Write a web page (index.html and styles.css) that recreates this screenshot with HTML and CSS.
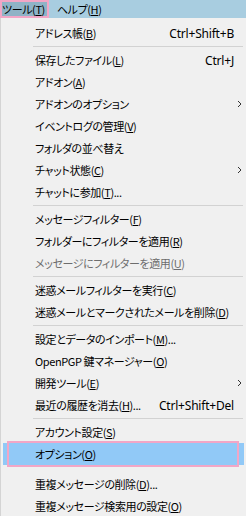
FILE: index.html
```html
<!DOCTYPE html>
<html lang="ja">
<head>
    <meta charset="UTF-8">
    <title>ツール</title>
    <link rel="stylesheet" href="styles.css">
</head>
<body>

    <!-- Menu bar -->
    <div class="menubar">
        <span class="menu-title open">ツール(<u>T</u>)</span>
        <span class="menu-title">ヘルプ(<u>H</u>)</span>
    </div>

    <!-- Tools menu -->
    <div class="menu">
        <div class="item"><span>アドレス帳(<u>B</u>)</span><span class="key">Ctrl+Shift+B</span></div>
        <div class="sep"></div>
        <div class="item"><span>保存したファイル(<u>L</u>)</span><span class="key">Ctrl+J</span></div>
        <div class="item"><span>アドオン(<u>A</u>)</span></div>
        <div class="item"><span>アドオンのオプション</span><span class="key"></span><span class="arrow"><svg width="5" height="8" viewBox="0 0 5 8"><path d="M1 1l3 3-3 3" fill="none" stroke="#333" stroke-width="1"/></svg></span></div>
        <div class="item"><span>イベントログの管理(<u>V</u>)</span></div>
        <div class="item"><span>フォルダの並べ替え</span></div>
        <div class="item"><span>チャット状態(<u>C</u>)</span><span class="key"></span><span class="arrow"><svg width="5" height="8" viewBox="0 0 5 8"><path d="M1 1l3 3-3 3" fill="none" stroke="#333" stroke-width="1"/></svg></span></div>
        <div class="item"><span>チャットに参加(<u>T</u>)...</span></div>
        <div class="sep"></div>
        <div class="item"><span>メッセージフィルター(<u>F</u>)</span></div>
        <div class="item"><span>フォルダーにフィルターを適用(<u>R</u>)</span></div>
        <div class="item disabled"><span>メッセージにフィルターを適用(<u>U</u>)</span></div>
        <div class="sep"></div>
        <div class="item"><span>迷惑メールフィルターを実行(<u>C</u>)</span></div>
        <div class="item"><span>迷惑メールとマークされたメールを削除(<u>D</u>)</span></div>
        <div class="sep"></div>
        <div class="item"><span>設定とデータのインポート(<u>M</u>)...</span></div>
        <div class="item"><span>OpenPGP 鍵マネージャー(<u>O</u>)</span></div>
        <div class="item"><span>開発ツール(<u>E</u>)</span><span class="key"></span><span class="arrow"><svg width="5" height="8" viewBox="0 0 5 8"><path d="M1 1l3 3-3 3" fill="none" stroke="#333" stroke-width="1"/></svg></span></div>
        <div class="item"><span>最近の履歴を消去(<u>H</u>)...</span><span class="key">Ctrl+Shift+Del</span></div>
        <div class="sep"></div>
        <div class="item"><span>アカウント設定(<u>S</u>)</span></div>
        <div class="item selected"><span>オプション(<u>O</u>)</span></div>
        <div class="gap"></div>
        <div class="item"><span>重複メッセージの削除(<u>D</u>)...</span></div>
        <div class="item"><span>重複メッセージ検索用の設定(<u>O</u>)</span></div>
    </div>

</body>
</html>
```

FILE: styles.css
```css
body {
    margin: 0;
    width: 246px;
    background-color: #f0f0f0;
    font-family: "Noto Sans CJK JP", "Noto Sans", sans-serif;
    font-size: 11px;
    letter-spacing: -0.4px;
    font-feature-settings: "palt";
    color: #000;
}

u {
    text-decoration: underline;
    text-underline-offset: 1px;
}

.menubar {
    display: flex;
    height: 18px;
    background-color: #a8cde0;
}

.menu-title {
    display: flex;
    align-items: center;
    padding: 0 4px 0 2px;
    margin-right: 6px;
    line-height: 16px;
}

.menu-title.open {
    background-color: #8fb3c6;
    box-shadow: inset 0 0 0 2px #f2a6c6;
}

.menu {
    border-left: 1px solid #d4d4d4;
    padding-top: 4px;
}

.item {
    display: grid;
    grid-template-columns: 1fr auto 10px;
    align-items: center;
    height: 22px;
    margin: 0 2px 0 2px;
    padding-left: 32px;
    white-space: nowrap;
}

.key {
    font-family: "Noto Sans", sans-serif;
    font-size: 12px;
    letter-spacing: -0.2px;
    text-align: right;
}

.arrow {
    display: flex;
    justify-content: flex-end;
    padding-right: 2px;
}

.disabled {
    color: #6d6d6d;
}

.selected {
    position: relative;
    background-color: #91c9f7;
}

.selected::after {
    content: "";
    position: absolute;
    left: 4px;
    top: -2px;
    right: 5px;
    bottom: -2px;
    border: 2px solid #f2a6c6;
}

.sep {
    height: 1px;
    margin: 2px 3px 2px 32px;
    background-color: #d2d2d2;
}

.gap {
    height: 8px;
}
```
